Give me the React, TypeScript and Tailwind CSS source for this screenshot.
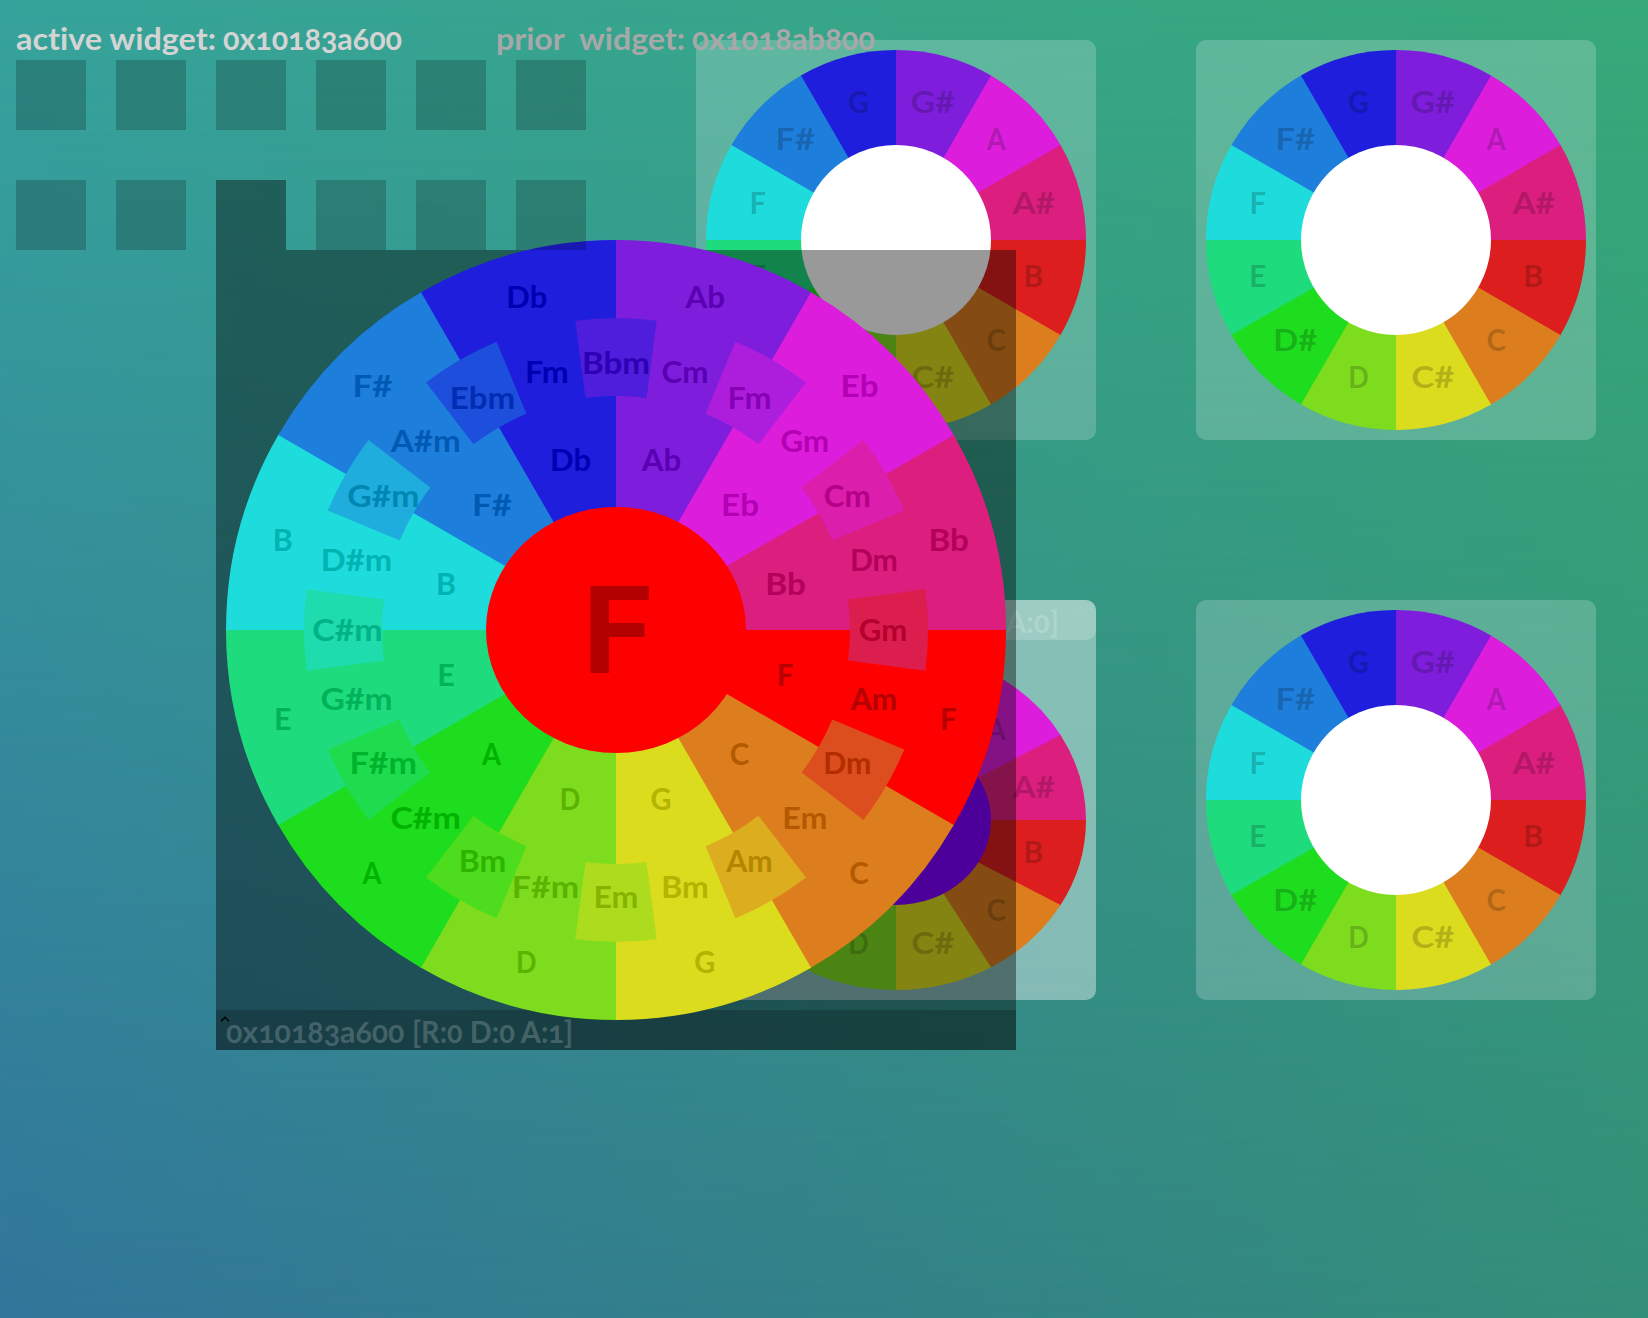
const SEG = ["#dc1e1e","#dc7e1e","#dcdc1e","#7edc1e","#1edc1e","#1edc7e","#1edcdc","#1e7edc","#1e1edc","#7e1edc","#dc1edc","#dc1e7e"];
const DARK = ["#b30000","#b35a00","#b3b300","#5ab300","#00b300","#00b35a","#00b3b3","#005ab3","#0000b3","#5a00b3","#b300b3","#b3005a"];
const MID = ["#dc1e4e","#dc4e1e","#dcad1e","#addc1e","#4edc1e","#1edc4e","#1edcad","#1eaddc","#1e4edc","#4e1edc","#ad1edc","#dc1ead"];
const MID_DARK = ["#b3002d","#b32d00","#b38600","#86b300","#2db300","#00b32d","#00b386","#0086b3","#002db3","#2d00b3","#8600b3","#b30086"];
const NOTES = ["B","C","C#","D","D#","E","F","F#","G","G#","A","A#"];
const MAJOR = ["F","C","G","D","A","E","B","F#","Db","Ab","Eb","Bb"];
const MEDIANT = ["Am","Em","Bm","F#m","C#m","G#m","D#m","A#m","Fm","Cm","Gm","Dm"];
const RELATIVE = ["Gm","Dm","Am","Em","Bm","F#m","C#m","G#m","Ebm","Bbm","Fm","Cm"];

const ADVANCE: Record<string, number> = { A: 21, B: 22, C: 21.5, D: 22.5, E: 19.5, F: 18.5, G: 23, "#": 23.5, b: 20.5, m: 27.5 };
const labelWidth = (s: string) => s.split("").reduce((w, c) => w + (ADVANCE[c] ?? 18), 0);

function point(cx: number, cy: number, rx: number, ry: number, deg: number): [number, number] {
  const a = (deg * Math.PI) / 180;
  return [cx + rx * Math.cos(a), cy + ry * Math.sin(a)];
}

function wedge(cx: number, cy: number, rx: number, ry: number, from: number, to: number) {
  const [x1, y1] = point(cx, cy, rx, ry, from);
  const [x2, y2] = point(cx, cy, rx, ry, to);
  return `M${cx} ${cy}L${x1} ${y1}A${rx} ${ry} 0 0 1 ${x2} ${y2}Z`;
}

function ringPart(cx: number, cy: number, r0: number, r1: number, from: number, to: number) {
  const [a, b] = point(cx, cy, r1, r1, from);
  const [c, d] = point(cx, cy, r1, r1, to);
  const [e, f] = point(cx, cy, r0, r0, to);
  const [g, h] = point(cx, cy, r0, r0, from);
  return `M${a} ${b}A${r1} ${r1} 0 0 1 ${c} ${d}L${e} ${f}A${r0} ${r0} 0 0 0 ${g} ${h}Z`;
}

// Each wedge but the last reaches a little under its neighbour, so no seam shows.
const wedgeEnd = (i: number) => i * 30 + (i < 11 ? 30.3 : 30);

function Label({ x, y, children, fill, opacity = 1 }: { x: number; y: number; children: string; fill: string; opacity?: number }) {
  const w = labelWidth(children) - 2;
  const dx = children.includes("#m") ? -1.5 : children.length === 1 ? -0.5 : 0;
  return (
    <text x={x + dx} y={y + 10.5} textAnchor="middle" fill={fill} fillOpacity={opacity} textLength={w} lengthAdjust="spacingAndGlyphs" className="font-['Lato',sans-serif] text-[29.5px] font-bold">
      {children}
    </text>
  );
}

function NoteWheel({ ry = 190, hub = "#ffffff" }: { ry?: number; hub?: string }) {
  const cy = ry;
  return (
    <svg width={380} height={ry * 2} className="block">
      {SEG.map((c, i) => (
        <path key={c} d={wedge(190, cy, 190, ry, i * 30, wedgeEnd(i))} fill={c} />
      ))}
      <ellipse cx={190} cy={cy} rx={95} ry={ry / 2} fill={hub} />
      {NOTES.map((n, i) => {
        const [x, y] = point(190, cy, 142.5, ry * 0.75, i * 30 + 15);
        return <Label key={n} x={x} y={y} fill="#000000" opacity={0.2}>{n}</Label>;
      })}
    </svg>
  );
}

function ChordWheel() {
  return (
    <svg width={780} height={780} className="block">
      {SEG.map((c, i) => (
        <path key={c} d={wedge(390, 390, 390, 390, i * 30, wedgeEnd(i))} fill={i === 0 ? "#ff0000" : c} />
      ))}
      {MID.map((c, i) => (
        <path key={c} d={ringPart(390, 390, 234, 312, i * 30 - 7.5, i * 30 + 7.5)} fill={c} />
      ))}
      <ellipse cx={390} cy={390} rx={130} ry={123} fill="#ff0000" />
      {MAJOR.map((n, i) => {
        const [ox, oy] = point(390, 390, 344.5, 344.5, i * 30 + 15);
        const [mx, my] = point(390, 390, 267, 267, i * 30 + 15);
        const [ix, iy] = point(390, 390, 175.5, 175.5, i * 30 + 15);
        const [px, py] = point(390, 390, 267, 267, i * 30);
        return (
          <g key={n}>
            <Label x={ox} y={oy} fill={DARK[i]}>{n}</Label>
            <Label x={mx} y={my} fill={DARK[i]}>{MEDIANT[i]}</Label>
            <Label x={ix} y={iy} fill={DARK[i]}>{n}</Label>
            <Label x={px} y={py} fill={MID_DARK[i]}>{RELATIVE[i]}</Label>
          </g>
        );
      })}
      <text x={356.5} y={433} fill="#b30000" textLength={69} lengthAdjust="spacingAndGlyphs" className="font-['Roboto',sans-serif] text-[123px] font-bold">F</text>
    </svg>
  );
}

type Run = { x: number; width: number; text: string };

function Caption({ runs, fill, opacity = 1, baseline = 33 }: { runs: Run[]; fill: string; opacity?: number; baseline?: number }) {
  return (
    <svg width={380} height={40} className="block overflow-visible">
      {runs.map((r) => (
        <text key={r.text} x={r.x} y={baseline} fill={fill} fillOpacity={opacity} textLength={r.width} lengthAdjust="spacingAndGlyphs" className="whitespace-pre font-['Lato',sans-serif] text-[29.5px] font-bold [font-feature-settings:'onum','liga'_0]">
          {r.text}
        </text>
      ))}
    </svg>
  );
}

const ACTIVE: Run[] = [{ x: 0, width: 200, text: "active widget:" }, { x: 207, width: 179, text: "0x10183a600" }];
const PRIOR: Run[] = [{ x: 0, width: 189, text: "prior  widget:" }, { x: 196, width: 183, text: "0x1018ab800" }];
const ACTIVE_STATE: Run[] = [{ x: 0, width: 178.5, text: "0x10183a600" }, { x: 186, width: 161, text: "[R:0 D:0 A:1]" }];
const PRIOR_STATE: Run[] = [{ x: 0, width: 182, text: "0x1018ab800" }, { x: 189, width: 164, text: "[R:0 D:0 A:0]" }];

function Pad({ active }: { active?: boolean }) {
  return <div className={active ? "size-[70px] bg-black/40" : "size-[70px] bg-black/20"} />;
}

export default function App() {
  return (
    <div className="relative h-[1318px] w-[1648px] overflow-hidden bg-[linear-gradient(to_right,#32769b,#33808b_45%,#338f79)]">
      <div className="absolute inset-0 bg-[linear-gradient(to_right,#36a39b,#37a58c_40%,#37a979)] [mask-image:linear-gradient(to_bottom,black,transparent)]" />

      <div className="absolute left-[696px] top-[40px] grid grid-cols-[400px_400px] gap-x-[100px] gap-y-[160px]">
        <div className="h-[400px] rounded-[10px] bg-white/20 p-[10px]"><NoteWheel /></div>
        <div className="h-[400px] rounded-[10px] bg-white/20 p-[10px]"><NoteWheel /></div>
        <div className="h-[400px] rounded-[10px] bg-white/40">
          <div className="h-[40px] rounded-[10px] bg-white/20 pl-[10px]">
            <Caption runs={PRIOR_STATE} fill="#ffffff" opacity={0.2} />
          </div>
          <div className="px-[10px] pt-[10px]"><NoteWheel ry={170} hub="#8000ff" /></div>
        </div>
        <div className="h-[400px] rounded-[10px] bg-white/20 p-[10px]"><NoteWheel /></div>
      </div>

      <div className="absolute left-[216px] top-[250px] flex h-[800px] w-[800px] flex-col justify-end bg-black/40">
        <div className="h-[40px] bg-black/20 pl-[10px]">
          <Caption runs={ACTIVE_STATE} fill="#ffffff" opacity={0.2} />
        </div>
        <svg width={10} height={6} className="absolute left-[4px] top-[766px]">
          <path d="M1 5.2L5 1.2L9 5.2" fill="none" stroke="#000000" strokeWidth={1.5} />
        </svg>
        <div className="absolute left-[10px] top-[-10px]"><ChordWheel /></div>
      </div>

      <div className="relative px-4 pt-[20px]">
        <div className="flex h-[40px]">
          <div className="w-[480px]"><Caption runs={ACTIVE} fill="#d4d4d4" baseline={30} /></div>
          <Caption runs={PRIOR} fill="#a8a8a8" baseline={30} />
        </div>
        <div className="grid w-[570px] grid-cols-6 gap-x-[30px] gap-y-[50px]">
          {Array.from({ length: 12 }, (_, i) => <Pad key={i} active={i === 8} />)}
        </div>
      </div>
    </div>
  );
}
